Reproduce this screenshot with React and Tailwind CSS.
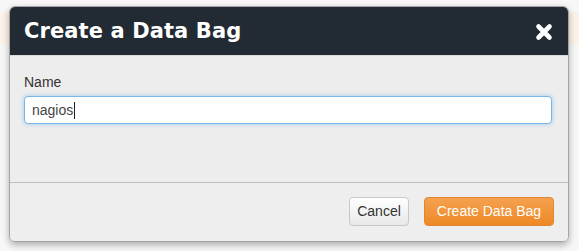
import React, { useState } from 'react';

const CloseIcon = () => (
    <svg width="18" height="18" viewBox="0 0 18 18" aria-hidden="true">
        <path d="M3.5 3.5 L14.5 14.5 M14.5 3.5 L3.5 14.5" stroke="#ffffff" strokeWidth="4.6" strokeLinecap="round" fill="none" />
    </svg>
);

const App = () => {
    const [nombre, setNombre] = useState('nagios');

    return (
        <div className="relative min-h-[251px] bg-[#f7f7f7] pt-[6px] pl-[9px] font-['Liberation_Sans',Arial,sans-serif]">
            {/* franja de fondo detras del modal */}
            <div className="absolute left-0 right-0 top-[12px] h-[33px] bg-[#fbf2ea]"></div>

            <div className="relative z-10 w-[560px] h-[236px] flex flex-col rounded-[6px] border border-[#a3a3a3] overflow-hidden shadow-[0_3px_7px_rgba(0,0,0,0.3)]">

                <div className="h-[49px] shrink-0 bg-[#222b33] flex items-center justify-between pl-[14px] pr-[15px] border-b border-[#dcdcdc]">
                    <h3 className="text-white text-[21px] font-bold leading-none tracking-[0.1px] font-['DejaVu_Sans',sans-serif] pt-[1px]">
                        Create a Data Bag
                    </h3>
                    <button className="flex items-center justify-center w-[18px] h-[18px] mt-[1px]">
                        <CloseIcon />
                    </button>
                </div>

                <div className="flex-1 bg-[#ededed] pt-[16px] px-[14px] border-b border-[#bdbdbd]">
                    <label className="block text-[14px] leading-[20px] text-[#333333] mb-[4px]">Name</label>
                    <div className="w-[528px] h-[28px] bg-white rounded-[4px] border border-[#7ab6ea] shadow-[0_0_4px_rgba(82,168,236,0.55)] flex items-center">
                        <span className="ml-[7px] text-[14px] text-[#444444] leading-none">{nombre}</span>
                        <span className="w-[1px] h-[17px] bg-[#222222] ml-[1px]"></span>
                    </div>
                </div>

                <div className="h-[58px] shrink-0 bg-[#eeeeee] flex items-start justify-end gap-[15px] pt-[14px] pr-[14px]">
                    <button
                        onClick={() => setNombre('')}
                        className="h-[29px] w-[60px] rounded-[4px] border border-[#c8c8c8] bg-[linear-gradient(#ffffff,#e8e8e8)] text-[14px] text-[#333333] shadow-[inset_0_1px_0_rgba(255,255,255,0.3)]"
                    >
                        Cancel
                    </button>
                    <button className="h-[29px] w-[130px] rounded-[4px] border border-[#e0862f] bg-[linear-gradient(#f5a14f,#ee8926)] text-[14px] text-white">
                        Create Data Bag
                    </button>
                </div>

            </div>
        </div>
    );
};

export default App;
